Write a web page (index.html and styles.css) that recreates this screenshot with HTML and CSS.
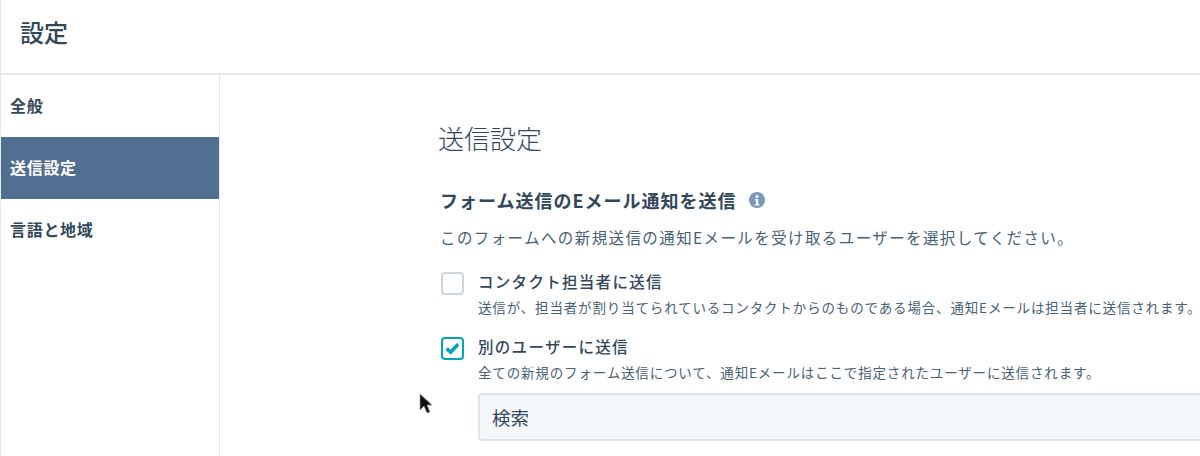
FILE: index.html
```html
<!DOCTYPE html>
<html lang="ja">
  <head>
    <meta charset="UTF-8" />
    <title>設定</title>
    <link rel="stylesheet" href="styles.css">
  </head>
  <body>
    <div class="header">
      <h1>設定</h1>
    </div>

    <div class="layout">
      <div class="sidebar">
        <div class="nav-item">全般</div>
        <div class="nav-item active">送信設定</div>
        <div class="nav-item">言語と地域</div>
      </div>

      <div class="content">
        <h2>送信設定</h2>

        <div class="field-title">
          <span>フォーム送信のEメール通知を送信</span>
          <svg class="info-icon" viewBox="0 0 16 16">
            <circle cx="8" cy="8" r="8" fill="#7c98b6" />
            <circle cx="8" cy="4.4" r="1.5" fill="#fff" />
            <path d="M6 7h3.2v5H10.400v1.500H5.800V12h1.100V8.500H6z" fill="#fff" />
          </svg>
        </div>
        <p class="field-desc">このフォームへの新規送信の通知Eメールを受け取るユーザーを選択してください。</p>

        <div class="option">
          <div class="checkbox"></div>
          <div class="option-text">
            <div class="option-label">コンタクト担当者に送信</div>
            <div class="option-help">送信が、担当者が割り当てられているコンタクトからのものである場合、通知Eメールは担当者に送信されます。</div>
          </div>
        </div>

        <div class="option">
          <div class="checkbox checked">
            <svg viewBox="0 0 16 16">
              <path d="M1.800 8l4.200 4 8-8.500" fill="none" stroke="#00a4bd" stroke-width="3.800" />
            </svg>
          </div>
          <div class="option-text">
            <div class="option-label">別のユーザーに送信</div>
            <div class="option-help">全ての新規のフォーム送信について、通知Eメールはここで指定されたユーザーに送信されます。</div>
          </div>
        </div>

        <div class="search-box">検索</div>

        <!-- mouse pointer caught in the capture -->
        <svg class="cursor" viewBox="0 0 14 22">
          <path d="M1 1v16l4-4 3 7 3-1-3-7h5z" fill="#111" stroke="#999" stroke-width="0.800" />
        </svg>
      </div>
    </div>
  </body>
</html>
```

FILE: styles.css
```css
html,
body {
  height: 100%;
}

body {
  margin: 0;
  overflow: hidden;
  background: #fff;
  color: #33475b;
  font-family: "Noto Sans CJK JP", "Noto Sans", sans-serif;
}

.header {
  height: 75px;
  display: flex;
  align-items: center;
  padding-left: 20px;
  border-bottom: 2px solid #e5e8eb;
  border-left: 1px solid #e5e8eb;
  box-sizing: border-box;
}

.header h1 {
  margin: 0 0 9px -1px;
  font-size: 24px;
  font-weight: 500;
  line-height: 1;
}

.layout {
  display: flex;
  height: 381px;
}

.sidebar {
  width: 220px;
  flex-shrink: 0;
  box-sizing: border-box;
  border-left: 1px solid #e5e8eb;
  border-right: 1px solid #e5e8eb;
}

.nav-item {
  height: 62px;
  display: flex;
  align-items: center;
  box-sizing: border-box;
  padding: 0 0 3px 9px;
  font-size: 16px;
  font-weight: 700;
  line-height: 1;
  letter-spacing: 0.700px;
}

.nav-item.active {
  background: #516f90;
  color: #fff;
}

.content {
  position: relative;
  flex: 1;
  min-width: 0;
  padding: 46px 0 0 218px;
  white-space: nowrap;
}

.content h2 {
  margin: 0 0 34px;
  font-size: 26px;
  font-weight: 300;
  line-height: 33px;
}

.field-title {
  display: flex;
  align-items: center;
  gap: 12px;
  margin-left: 2px;
  font-size: 18px;
  font-weight: 700;
  line-height: 24px;
  letter-spacing: 1px;
}

.info-icon {
  width: 16px;
  height: 16px;
}

.field-desc {
  margin: 14px 0 22px 2px;
  font-size: 15.500px;
  line-height: 22px;
  letter-spacing: 1.400px;
  color: #4a5f75;
}

.option {
  display: flex;
  gap: 14px;
  margin: 0 0 18px 3px;
}

.checkbox {
  width: 19px;
  height: 19px;
  margin-top: 2px;
  border: 2px solid #cbd6e2;
  border-radius: 4px;
  background: #fff;
  flex-shrink: 0;
}

.checkbox.checked {
  border-color: #00a4bd;
}

.checkbox svg {
  display: block;
  width: 15px;
  height: 15px;
  margin: 2px;
}

.option-label {
  font-size: 15.500px;
  font-weight: 500;
  line-height: 22px;
  letter-spacing: 1.300px;
  margin-bottom: 5px;
}

.option-help {
  font-size: 13.500px;
  line-height: 20px;
  letter-spacing: 0.840px;
  color: #4a5f75;
}

.search-box {
  height: 48px;
  box-sizing: border-box;
  margin: -7px 0 0 40px;
  padding-left: 12px;
  display: flex;
  align-items: center;
  background: #f5f8fa;
  border: 2px solid #dfe3eb;
  border-right: none;
  border-radius: 4px 0 0 4px;
  font-size: 18.500px;
  color: #33475b;
}

.cursor {
  position: absolute;
  left: 199px;
  top: 318px;
  width: 14px;
  height: 22px;
}
```
